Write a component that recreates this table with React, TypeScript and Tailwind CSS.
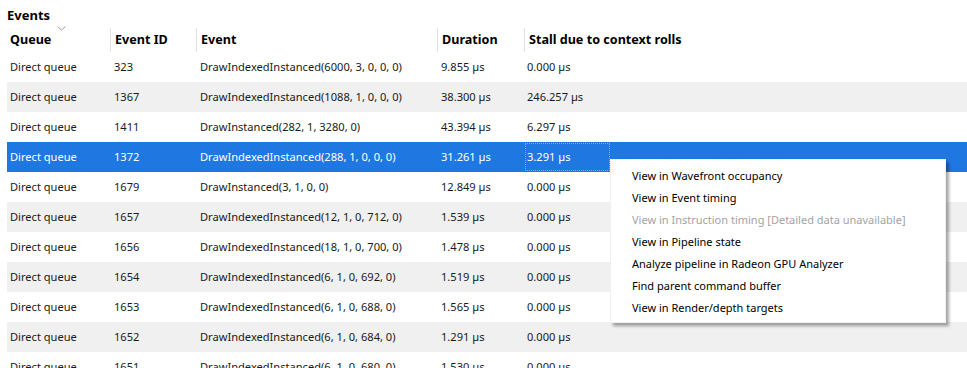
const rows = [
  ['Direct queue', '323', 'DrawIndexedInstanced(6000, 3, 0, 0, 0)', '9.855 µs', '0.000 µs'],
  ['Direct queue', '1367', 'DrawIndexedInstanced(1088, 1, 0, 0, 0)', '38.300 µs', '246.257 µs'],
  ['Direct queue', '1411', 'DrawInstanced(282, 1, 3280, 0)', '43.394 µs', '6.297 µs'],
  ['Direct queue', '1372', 'DrawIndexedInstanced(288, 1, 0, 0, 0)', '31.261 µs', '3.291 µs'],
  ['Direct queue', '1679', 'DrawInstanced(3, 1, 0, 0)', '12.849 µs', '0.000 µs'],
  ['Direct queue', '1657', 'DrawIndexedInstanced(12, 1, 0, 712, 0)', '1.539 µs', '0.000 µs'],
  ['Direct queue', '1656', 'DrawIndexedInstanced(18, 1, 0, 700, 0)', '1.478 µs', '0.000 µs'],
  ['Direct queue', '1654', 'DrawIndexedInstanced(6, 1, 0, 692, 0)', '1.519 µs', '0.000 µs'],
  ['Direct queue', '1653', 'DrawIndexedInstanced(6, 1, 0, 688, 0)', '1.565 µs', '0.000 µs'],
  ['Direct queue', '1652', 'DrawIndexedInstanced(6, 1, 0, 684, 0)', '1.291 µs', '0.000 µs'],
  ['Direct queue', '1651', 'DrawIndexedInstanced(6, 1, 0, 680, 0)', '1.530 µs', '0.000 µs'],
];

const menuItems = [
  { label: 'View in Wavefront occupancy' },
  { label: 'View in Event timing' },
  { label: 'View in Instruction timing [Detailed data unavailable]', disabled: true },
  { label: 'View in Pipeline state' },
  { label: 'Analyze pipeline in Radeon GPU Analyzer' },
  { label: 'Find parent command buffer' },
  { label: 'View in Render/depth targets' },
];

const SELECTED = 3;

export default function App() {
  return (
    <div
      className="relative w-[967px] h-[368px] overflow-hidden bg-white text-[11.1px] text-[#1a1a1a]"
      style={{ fontFamily: '"Segoe UI", "Noto Sans", "Open Sans", sans-serif' }}
    >
      <div className="pl-[7px] pt-[6px] h-[28px] text-[13px] font-bold leading-[18px] text-black">Events</div>

      {/* Header */}
      <div className="flex h-[24px] ml-[7px] text-[12.6px] font-bold text-black">
        <div className="relative w-[103px] flex items-center pl-[3px]">
          Queue
          <svg className="absolute left-[50px] top-[-2px]" width="9" height="5" viewBox="0 0 9 5">
            <path d="M0.5 0.5 L4.5 4 L8.5 0.5" fill="none" stroke="#a0a0a0" strokeWidth="1" />
          </svg>
        </div>
        <div className="w-[86px] flex items-center pl-[4px] border-l border-[#e2e2e2]">Event ID</div>
        <div className="w-[241px] flex items-center pl-[4px] border-l border-[#e2e2e2]">Event</div>
        <div className="w-[87px] flex items-center pl-[4px] border-l border-[#e2e2e2]">Duration</div>
        <div className="flex-1 flex items-center pl-[4px] border-l border-[#e2e2e2]">Stall due to context rolls</div>
      </div>

      {/* Rows */}
      <div className="ml-[7px]">
        {rows.map((r, i) => {
          const sel = i === SELECTED;
          const bg = sel ? 'bg-[#1f78e1] text-white' : i % 2 === 1 ? 'bg-[#f0f0f0]' : 'bg-white';
          return (
            <div key={i} className={`flex h-[30px] items-center ${bg}`}>
              <div className="w-[103px] pl-[3px]">{r[0]}</div>
              <div className="w-[86px] pl-[4px]">{r[1]}</div>
              <div className="w-[241px] pl-[4px]">{r[2]}</div>
              <div className="w-[87px] pl-[4px]">{r[3]}</div>
              <div
                className={`w-[87px] h-[30px] flex items-center pl-[3px] ${
                  sel ? 'outline-1 outline-dotted outline-offset-[-2px] outline-[#e0a040]' : ''
                }`}
              >
                {r[4]}
              </div>
            </div>
          );
        })}
      </div>

      {/* Context menu */}
      <div className="absolute left-[610px] top-[159px] w-[336px] h-[164px] bg-white border border-[#f0f0f0] shadow-[3px_3px_3px_rgba(0,0,0,0.35)] pt-[5px] text-[11px]">
        {menuItems.map((m, i) => (
          <div
            key={i}
            className={`h-[22px] flex items-center pl-[21px] ${m.disabled ? 'text-[#a3a3a3]' : 'text-black'}`}
          >
            {m.label}
          </div>
        ))}
      </div>
    </div>
  );
}
